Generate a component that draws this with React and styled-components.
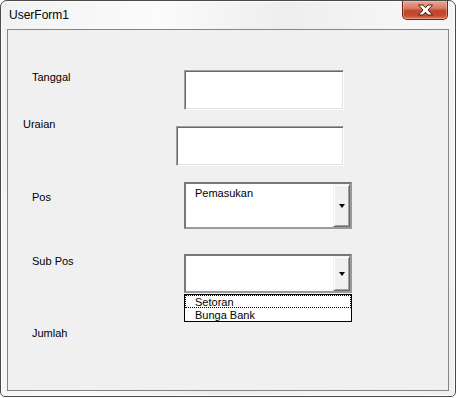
import styled, { createGlobalStyle } from 'styled-components';

const Global = createGlobalStyle`
  html, body {
    margin: 0;
    padding: 0;
    background: #ffffff;
  }
  body {
    font-family: "Liberation Sans", Arial, sans-serif;
  }
`;

const Window = styled.div`
  width: 456px;
  height: 397px;
  box-sizing: border-box;
  border: 1px solid #4a4a4a;
  border-radius: 7px 7px 5px 5px;
  background: linear-gradient(100deg, #f2f2f2 0%, #fbfbfb 30%, #eeeeee 55%, #f7f7f7 80%, #f0f0f0 100%);
  box-shadow: inset 0 0 0 1px #fdfdfd;
  padding: 0 6px 5px 6px;
  display: flex;
  flex-direction: column;
`;

const TitleBar = styled.div`
  height: 28px;
  flex: none;
  display: flex;
  justify-content: space-between;
  align-items: flex-start;
`;

const Title = styled.span`
  font-size: 12px;
  line-height: 14px;
  color: #000;
  padding: 7px 0 0 2px;
`;

const CloseButton = styled.div`
  width: 46px;
  height: 19px;
  box-sizing: border-box;
  margin-right: 1px;
  border: 1px solid #6b2418;
  border-top: none;
  border-radius: 0 0 5px 5px;
  background: linear-gradient(180deg, #e9a594 0%, #d97a62 40%, #c2422a 55%, #c84a30 80%, #dc7657 100%);
  box-shadow: inset 0 0 0 1px rgba(255, 210, 195, 0.45);
  display: flex;
  align-items: center;
  justify-content: center;
`;

const Client = styled.div`
  flex: 1;
  position: relative;
  border: 1px solid #858585;
  background: #f0f0f0;
  display: flex;
  flex-direction: column;
`;

const Row = styled.div`
  display: flex;
  align-items: flex-start;
  margin-top: ${(p) => p.$top}px;
  position: relative;
`;

const Label = styled.div`
  box-sizing: border-box;
  width: ${(p) => p.$field}px;
  padding-left: ${(p) => p.$left}px;
  margin-top: ${(p) => p.$offset || 0}px;
  font-size: 11px;
  line-height: 13px;
  color: #000;
  flex: none;
`;

const TextBox = styled.div`
  box-sizing: border-box;
  width: ${(p) => p.$w}px;
  height: ${(p) => p.$h}px;
  margin-top: ${(p) => p.$offset || 0}px;
  background: #fff;
  border: 1px solid;
  border-color: #a0a0a0 #ffffff #ffffff #a0a0a0;
  box-shadow: inset 1px 1px 0 #696969, inset -1px -1px 0 #e3e3e3;
`;

const Combo = styled.div`
  box-sizing: border-box;
  width: ${(p) => p.$w}px;
  height: ${(p) => p.$h}px;
  background: #fff;
  border: 2px solid;
  border-color: #787878 #9a9a9a #9a9a9a #787878;
  display: flex;
`;

const ComboText = styled.div`
  flex: 1;
  font-size: 11px;
  line-height: 13px;
  color: #000;
  padding: 3px 0 0 9px;
`;

const DropButton = styled.div`
  width: 17px;
  flex: none;
  box-sizing: border-box;
  background: #f0f0f0;
  border: 1px solid;
  border-color: #f0f0f0 #696969 #696969 #f0f0f0;
  box-shadow: inset 1px 1px 0 #ffffff, inset -1px -1px 0 #a0a0a0;
  display: flex;
  align-items: center;
  justify-content: center;
`;

const Arrow = styled.div`
  width: 0;
  height: 0;
  border-left: 3.5px solid transparent;
  border-right: 3.5px solid transparent;
  border-top: 4px solid #000;
  margin-left: 1px;
`;

const DropList = styled.div`
  position: absolute;
  left: ${(p) => p.$left}px;
  top: 100%;
  margin-top: 1px;
  width: 168px;
  box-sizing: border-box;
  border: 1px solid #000;
  background: #fff;
  z-index: 2;
`;

const ListItem = styled.div`
  height: 13px;
  box-sizing: border-box;
  font-size: 11px;
  line-height: 12px;
  color: #000;
  padding-left: 9px;
  border: 1px dotted ${(p) => (p.$focus ? '#000' : 'transparent')};
`;

function CloseIcon() {
  return (
    <svg width="17" height="12" viewBox="0 0 17 12">
      <path
        d="M1.5 1 L6 1 L8.5 3.8 L11 1 L15.5 1 L11 6 L15.5 11 L11 11 L8.5 8.2 L6 11 L1.5 11 L6 6 Z"
        fill="#ffffff"
        stroke="#4a1d14"
        strokeWidth="1"
        strokeLinejoin="round"
      />
    </svg>
  );
}

export default function App() {
  return (
    <>
      <Global />
      <Window>
        <TitleBar>
          <Title>UserForm1</Title>
          <CloseButton>
            <CloseIcon />
          </CloseButton>
        </TitleBar>
        <Client>
          <Row $top={40}>
            <Label $left={24} $field={176} $offset={1}>Tanggal</Label>
            <TextBox $w={160} $h={40} />
          </Row>
          <Row $top={8}>
            <Label $left={15} $field={168}>Uraian</Label>
            <TextBox $w={168} $h={40} $offset={8} />
          </Row>
          <Row $top={16}>
            <Label $left={24} $field={176} $offset={9}>Pos</Label>
            <Combo $w={168} $h={47}>
              <ComboText>Pemasukan</ComboText>
              <DropButton>
                <Arrow />
              </DropButton>
            </Combo>
          </Row>
          <Row $top={25}>
            <Label $left={24} $field={176} $offset={1}>Sub Pos</Label>
            <Combo $w={168} $h={39}>
              <ComboText />
              <DropButton>
                <Arrow />
              </DropButton>
            </Combo>
            <DropList $left={176}>
              <ListItem $focus>Setoran</ListItem>
              <ListItem>Bunga Bank</ListItem>
            </DropList>
          </Row>
          <Row $top={34}>
            <Label $left={24} $field={176}>Jumlah</Label>
          </Row>
        </Client>
      </Window>
    </>
  );
}
